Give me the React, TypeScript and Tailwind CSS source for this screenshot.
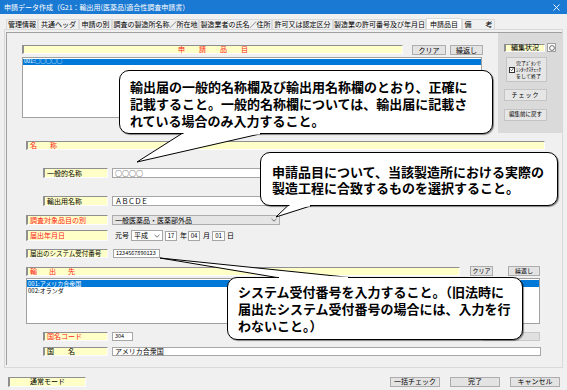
import React from "react";

const FONT = "font-['Noto_Sans_CJK_JP','Noto_Sans',sans-serif]";
const SUNKEN =
  "border border-l-2 border-t-[#8f8f8f] border-l-[#8f8f8f] border-r-[#fcfcfc] border-b-[#fcfcfc]";
const BOX = "border border-[#a6a6a6] bg-white";
const RED = "text-[#ff1a1a]";

type P = { className?: string; children?: React.ReactNode };

function Lbl({ className = "", children }: P) {
  return (
    <div className={`${SUNKEN} bg-[#ffffc8] flex items-center pl-[2px] whitespace-nowrap ${className}`}>
      {children}
    </div>
  );
}

function Btn({ className = "", children }: P) {
  return (
    <div
      className={`border border-[#adadad] bg-[#e3e3e3] flex items-center justify-center whitespace-nowrap ${className}`}
    >
      {children}
    </div>
  );
}

function Field({ className = "", children }: P) {
  return <div className={`${BOX} flex items-center pl-[2px] whitespace-nowrap ${className}`}>{children}</div>;
}

function Chevron() {
  return (
    <svg width="6" height="4" viewBox="0 0 6 4" className="shrink-0">
      <polyline points="0.5,0.8 3,3.2 5.5,0.8" fill="none" stroke="#555" strokeWidth="0.8" />
    </svg>
  );
}

const tabs: { t: string; c: string; sel?: boolean }[] = [
  { t: "管理情報", c: "w-[32px]" },
  { t: "共通ヘッダ", c: "w-[41px]" },
  { t: "申請の別", c: "w-[33px]" },
  { t: "調査の製造所名称／所在地", c: "w-[87px]" },
  { t: "製造業者の氏名／住所", c: "w-[73px]" },
  { t: "許可又は認定区分", c: "w-[61px]" },
  { t: "製造業の許可番号及び年月日", c: "w-[93px]" },
  { t: "申請品目", c: "w-[36px]", sel: true },
  { t: "備　　考", c: "w-[33px]" },
];

export default function App() {
  return (
    <div
      className={`relative w-[567px] h-[390px] overflow-hidden bg-[#f0f0f0] text-[7px] leading-none text-black ${FONT}`}
    >
      {/* title bar */}
      <div className="h-[14px] bg-[#1979d3] flex items-center justify-between pl-[4px] pr-[7px] text-white text-[7px]">
        <span>申請データ作成（G21：輸出用(医薬品)適合性調査申請書）</span>
        <svg width="7" height="7" viewBox="0 0 7 7">
          <line x1="0.5" y1="0.5" x2="6.5" y2="6.5" stroke="white" strokeWidth="0.9" />
          <line x1="6.5" y1="0.5" x2="0.5" y2="6.5" stroke="white" strokeWidth="0.9" />
        </svg>
      </div>

      {/* tabs */}
      <div className="mt-[5px] ml-[6px] flex h-[10px] items-end">
        {tabs.map((tb) => (
          <div
            key={tb.t}
            className={`${tb.c} flex items-center justify-center border border-b-0 border-[#d9d9d9] whitespace-nowrap ${
              tb.sel ? "h-[11px] bg-white" : "h-[10px] bg-[#f0f0f0]"
            }`}
          >
            {tb.t}
          </div>
        ))}
      </div>

      {/* tab panel */}
      <div className="ml-[4px] w-[559px] h-[339px] border border-[#d9d9d9] pl-[1px] pt-[2px]">
        <div className="w-[556px] h-[333px] border-t border-l border-[#a0a0a0] flex flex-col">
          {/* top section */}
          <div className="flex items-start">
            <div className="ml-[15px] mt-[12px] w-[461px]">
              <div className="flex items-start h-[10px]">
                <div
                  className={`${SUNKEN} bg-[#ffffc8] w-[381px] h-[9px] flex items-center justify-center ${RED} tracking-[14px] pl-[14px]`}
                >
                  申請品目
                </div>
                <Btn className="ml-[9px] w-[34px] h-[10px]">クリア</Btn>
                <Btn className="ml-[4px] w-[33px] h-[10px]">繰返し</Btn>
              </div>
              <div className="mt-[2px] w-[460px] h-[61px] border border-[#a0a0a0] bg-white pt-[1px]">
                <div className="h-[6px] bg-[#0078d7] text-white text-[5.5px] flex items-center pl-[1px]">
                  001:○○○○○
                </div>
              </div>
            </div>

            {/* right panel */}
            <div className="ml-[15px] w-[64px] h-[100px] bg-[#dadada] pl-[6px] pt-[10px] flex flex-col">
              <div className="flex items-center">
                <div
                  className={`${SUNKEN} bg-[#ffffc8] w-[41px] h-[8px] flex items-center justify-center`}
                >
                  編集状況
                </div>
                <div className="ml-[2px] w-[9px] h-[9px] bg-white border border-[#a0a0a0] flex items-center justify-center">
                  <svg width="6" height="6" viewBox="0 0 6 6">
                    <circle cx="3" cy="3" r="2.4" fill="none" stroke="#333" strokeWidth="0.7" />
                  </svg>
                </div>
              </div>
              <div className="mt-[5px] ml-[2px] w-[41px] h-[25px] border border-[#c4c4c4] bg-[#e6e6e6] flex items-center pl-[2px]">
                <div className="w-[6px] h-[6px] border border-[#333] bg-white flex items-center justify-center shrink-0">
                  <svg width="5" height="5" viewBox="0 0 5 5">
                    <polyline points="0.6,2.5 2,4 4.4,0.8" fill="none" stroke="#111" strokeWidth="0.8" />
                  </svg>
                </div>
                <div className="ml-[1px] flex flex-col items-center text-[5px] leading-[6.5px]">
                  <span>完了ﾎﾞﾀﾝで</span>
                  <span>ｼﾝﾀｯｸｽﾁｪｯｸ</span>
                  <span>をして終了</span>
                </div>
              </div>
              <Btn className="mt-[7px] w-[43px] h-[12px] text-[6px] tracking-[1px] border-[#c4c4c4] bg-[#e6e6e6]">
                チェック
              </Btn>
              <Btn className="mt-[8px] w-[43px] h-[12px] text-[5.5px] border-[#c4c4c4] bg-[#e6e6e6]">
                編集前に戻す
              </Btn>
            </div>
          </div>

          {/* 名称 */}
          <div
            className={`${SUNKEN} bg-[#ffffc8] ml-[19px] mt-[8px] w-[519px] h-[9px] flex items-center pl-[2px] ${RED} tracking-[13px]`}
          >
            名称
          </div>

          <div className="mt-[18px] flex items-center h-[10px]">
            <Lbl className="ml-[36px] w-[65px] h-[10px]">一般的名称</Lbl>
            <Field className="ml-[4px] w-[429px] h-[10px]">○○○○</Field>
          </div>

          <div className="mt-[18px] flex items-center h-[10px]">
            <Lbl className="ml-[36px] w-[65px] h-[10px]">輸出用名称</Lbl>
            <Field className="ml-[4px] w-[429px] h-[10px] tracking-[-0.5px]">ＡＢＣＤＥ</Field>
          </div>

          <div className="mt-[9px] flex items-center h-[10px]">
            <Lbl className={`ml-[19px] w-[82px] h-[10px] ${RED}`}>調査対象品目の別</Lbl>
            <div className="ml-[4px] w-[168px] h-[10px] border border-[#adadad] bg-[#e5e5e5] flex items-center justify-between pl-[2px] pr-[2px]">
              <span>一般医薬品・医薬部外品</span>
              <Chevron />
            </div>
          </div>

          <div className="mt-[5px] flex items-center h-[11px]">
            <Lbl className={`ml-[19px] w-[82px] h-[11px] ${RED}`}>届出年月日</Lbl>
            <span className="ml-[7px]">元号</span>
            <div className={`${BOX} ml-[2px] w-[32px] h-[11px] flex items-center justify-between px-[2px]`}>
              <span>平成</span>
              <Chevron />
            </div>
            <div className={`${BOX} ml-[2px] w-[12px] h-[10px] flex items-center justify-center text-[6px]`}>17</div>
            <span className="ml-[3px]">年</span>
            <div className={`${BOX} ml-[1px] w-[12px] h-[10px] flex items-center justify-center text-[6px]`}>04</div>
            <span className="ml-[3px]">月</span>
            <div className={`${BOX} ml-[2px] w-[13px] h-[10px] flex items-center justify-center text-[6px]`}>01</div>
            <span className="ml-[2px]">日</span>
          </div>

          <div className="mt-[8px] flex items-center h-[9px]">
            <Lbl className="ml-[19px] w-[82px] h-[9px] text-[6.5px]">届出のシステム受付番号</Lbl>
            <Field className="ml-[5px] w-[47px] h-[9px] text-[5.5px]">1234567890123</Field>
          </div>

          {/* 輸出先 */}
          <div className="mt-[8px] flex items-start h-[10px]">
            <div
              className={`${SUNKEN} bg-[#ffffc8] ml-[19px] mt-[1px] w-[434px] h-[9px] flex items-center pl-[2px] ${RED} tracking-[12px]`}
            >
              輸出先
            </div>
            <Btn className="ml-[10px] w-[23px] h-[10px] text-[6px]">クリア</Btn>
            <Btn className="ml-[15px] w-[32px] h-[10px] text-[6px]">繰返し</Btn>
          </div>
          <div className="ml-[19px] mt-[2px] w-[514px] h-[46px] border border-[#a0a0a0] bg-white pt-[1px] text-[6px]">
            <div className="h-[7px] flex items-center bg-[#0078d7] text-white pl-[1px]">001:アメリカ合衆国</div>
            <div className="h-[7px] flex items-center pl-[1px]">002:オランダ</div>
          </div>

          <div className="mt-[8px] flex items-center h-[9px]">
            <Lbl className={`ml-[36px] w-[65px] h-[9px] ${RED}`}>国名コード</Lbl>
            <Field className="ml-[4px] w-[21px] h-[9px] text-[5.5px]">304</Field>
            <div className="ml-[350px] w-[57px] h-[9px] border border-[#c8c8c8] bg-[#e0e0e0]" />
          </div>

          <div className="mt-[6px] flex items-center h-[9px]">
            <Lbl className="ml-[36px] w-[65px] h-[9px] tracking-[14px]">国名</Lbl>
            <Field className="ml-[4px] w-[429px] h-[9px]">アメリカ合衆国</Field>
          </div>
        </div>
      </div>

      {/* bottom bar */}
      <div className="mt-[8px] flex items-center h-[11px]">
        <div className={`${SUNKEN} bg-[#ffffc8] ml-[8px] w-[78px] h-[10px] flex items-center justify-center`}>
          通常モード
        </div>
        <Btn className="ml-[304px] w-[50px] h-[10px]">一括チェック</Btn>
        <Btn className="ml-[10px] w-[50px] h-[10px]">完了</Btn>
        <Btn className="ml-[10px] w-[50px] h-[10px]">キャンセル</Btn>
      </div>

      {/* callouts */}
      <div className="absolute left-[119px] top-[70px] w-[374px] h-[64px] rounded-[10px] border border-black bg-white pl-[10px] pt-[7px] text-[13px] font-bold leading-[17px] whitespace-nowrap shadow-[1px_1px_1px_rgba(0,0,0,0.45)]">
        輸出届の一般的名称欄及び輸出用名称欄のとおり、正確に
        <br />
        記載すること。一般的名称欄については、輸出届に記載さ
        <br />
        れている場合のみ入力すること。
      </div>
      <div className="absolute left-[260px] top-[152px] w-[298px] h-[54px] rounded-[10px] border border-black bg-white pl-[11px] pt-[11px] text-[13px] font-bold leading-[16px] whitespace-nowrap shadow-[1px_1px_1px_rgba(0,0,0,0.45)]">
        申請品目について、当該製造所における実際の
        <br />
        製造工程に合致するものを選択すること。
      </div>
      <div className="absolute left-[227px] top-[277px] w-[296px] h-[63px] rounded-[10px] border border-black bg-white pl-[10px] pt-[5px] text-[13px] font-bold leading-[17px] whitespace-nowrap shadow-[1px_1px_1px_rgba(0,0,0,0.45)]">
        システム受付番号を入力すること。（旧法時に
        <br />
        届出たシステム受付番号の場合には、入力を行
        <br />
        わないこと。）
      </div>

      {/* callout tails */}
      <svg className="absolute left-0 top-0 pointer-events-none" width="567" height="390">
        <polygon points="182,133.5 137,162 262,133.5" fill="white" stroke="black" strokeWidth="1" />
        <line x1="183.5" y1="133.5" x2="260" y2="133.5" stroke="white" strokeWidth="2.2" />

        <polygon points="288,205.5 276,217 312,205.5" fill="white" stroke="black" strokeWidth="1" />
        <line x1="289.5" y1="205.5" x2="310" y2="205.5" stroke="white" strokeWidth="2.2" />

        <polygon points="277,277.5 160,258 350,277.5" fill="white" stroke="black" strokeWidth="1" />
        <line x1="279" y1="277.5" x2="348" y2="277.5" stroke="white" strokeWidth="2.2" />
      </svg>
    </div>
  );
}
